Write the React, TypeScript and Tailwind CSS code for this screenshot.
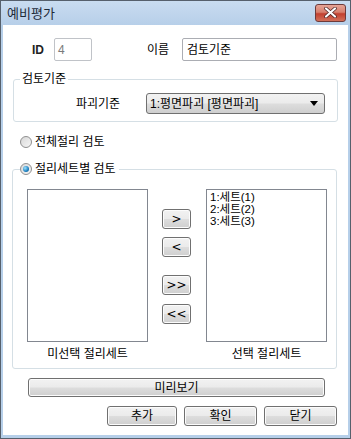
import { useState } from 'react'

const font = "font-['Liberation_Sans','Noto_Sans_CJK_KR',sans-serif]"
const btn =
  'flex items-center justify-center rounded-[3px] border border-[#707070] bg-[linear-gradient(to_bottom,#f2f2f2_0%,#ebebeb_48%,#dddddd_52%,#cfcfcf_100%)] text-[12px] text-black shadow-[inset_0_0_0_1px_#fcfcfc]'

function Radio({ checked, label }: { checked: boolean; label: string }) {
  return (
    <span className="flex items-center gap-[3px]">
      <span className="flex h-[12px] w-[12px] items-center justify-center rounded-full border border-[#8f8f8f] bg-[linear-gradient(135deg,#d8d8d8,#f6f6f6)]">
        {checked && (
          <span className="h-[6px] w-[6px] rounded-full bg-[radial-gradient(circle_at_35%_35%,#9fe3ff,#1d7fbf_60%,#0b4f86)]" />
        )}
      </span>
      <span className="text-[12px] leading-[14px] text-black">{label}</span>
    </span>
  )
}

function SmallButton({ label }: { label: string }) {
  return <button className={`${btn} h-[20px] w-[29px] text-[10px] font-['DejaVu_Sans',sans-serif]`}>{label}</button>
}

export default function App() {
  const [mode] = useState<'all' | 'set'>('set')
  const selected = ['1:세트(1)', '2:세트(2)', '3:세트(3)']

  return (
    <div className={`${font} flex h-[439px] w-[351px] flex-col border border-[#56606c] bg-[#b6cfe9]`}>
      {/* Title bar */}
      <div className="flex h-[24px] shrink-0 items-center justify-between bg-[linear-gradient(to_bottom,#c9dcf0,#b7cfe9)] pl-[6px] pr-[4px]">
        <span className="text-[13px] leading-none text-[#1e2a38]">예비평가</span>
        <button className="mt-[-1px] flex h-[18px] w-[31px] items-center justify-center rounded-[3px] border border-[#6d3b3b] bg-[linear-gradient(to_bottom,#e6a496_0%,#d7806e_45%,#c2402f_55%,#d2705a_100%)]">
          <svg width="13" height="11" viewBox="0 0 13 11">
            <path d="M2 1.5 L11 9.5 M11 1.5 L2 9.5" stroke="#4a2222" strokeWidth="3.6" strokeLinecap="round" />
            <path d="M2 1.5 L11 9.5 M11 1.5 L2 9.5" stroke="#ffffff" strokeWidth="2.2" strokeLinecap="round" />
          </svg>
        </button>
      </div>

      {/* Client area */}
      <div className="mx-[2px] mb-[3px] flex flex-1 flex-col bg-white">
        {/* ID / name row */}
        <div className="mt-[13px] flex h-[23px] items-center">
          <span className="ml-[29px] w-[22px] text-[12px] font-bold text-[#222]">ID</span>
          <div className="flex h-[23px] w-[38px] items-center rounded-[2px] border border-[#c0c3c8] px-[3px] text-[12px] text-[#7a7a7a]">
            4
          </div>
          <span className="ml-[55px] w-[35px] text-[12px] text-black">이름</span>
          <div className="flex h-[23px] w-[155px] items-center rounded-[2px] border border-[#abadb3] px-[4px] text-[12px] text-black">
            검토기준
          </div>
        </div>

        {/* 검토기준 group */}
        <fieldset className="mx-[10px] mt-[11px] w-[325px] rounded-[3px] border border-[#d5dfe5] px-0 pt-[7px] pb-[7px]">
          <legend className="ml-[6px] px-[2px] text-[12px] leading-[14px] text-black">검토기준</legend>
          <div className="flex items-center">
            <span className="ml-[62px] w-[70px] text-[12px] text-black">파괴기준</span>
            <div className="flex h-[21px] w-[179px] items-center justify-between rounded-[3px] border border-[#707070] bg-[linear-gradient(to_bottom,#f2f2f2_0%,#ebebeb_48%,#dddddd_52%,#cfcfcf_100%)] pl-[3px] pr-[6px]">
              <span className="text-[12px] text-black">1:평면파괴 [평면파괴]</span>
              <svg width="8" height="5" viewBox="0 0 8 5">
                <path d="M0 0 H8 L4 5 Z" fill="#000" />
              </svg>
            </div>
          </div>
        </fieldset>

        {/* 전체절리 radio */}
        <div className="ml-[17px] mt-[13px]">
          <Radio checked={mode === 'all'} label="전체절리 검토" />
        </div>

        {/* 절리세트별 group */}
        <fieldset className="mx-[9px] mt-[13px] w-[325px] rounded-[3px] border border-[#d5dfe5] px-0 pt-[13px] pb-[7px]">
          <legend className="ml-[7px] pr-[3px]">
            <Radio checked={mode === 'set'} label="절리세트별 검토" />
          </legend>
          <div className="flex">
            <div className="ml-[14px] flex w-[121px] flex-col items-center">
              <div className="h-[153px] w-[121px] border border-[#828790] bg-white" />
              <span className="mt-[5px] text-[12px] leading-[14px] text-black">미선택 절리세트</span>
            </div>
            <div className="ml-[14px] flex w-[29px] flex-col pt-[20px]">
              <SmallButton label=">" />
              <div className="mt-[8px]">
                <SmallButton label="<" />
              </div>
              <div className="mt-[18px]">
                <SmallButton label=">>" />
              </div>
              <div className="mt-[9px]">
                <SmallButton label="<<" />
              </div>
            </div>
            <div className="ml-[15px] flex w-[121px] flex-col items-center">
              <div className="flex h-[153px] w-[121px] flex-col border border-[#828790] bg-white px-[3px] pt-[1px]">
                {selected.map(s => (
                  <span key={s} className="text-[11.5px] leading-[12px] text-black">
                    {s}
                  </span>
                ))}
              </div>
              <span className="mt-[5px] text-[12px] leading-[14px] text-black">선택 절리세트</span>
            </div>
          </div>
        </fieldset>

        {/* Preview */}
        <button className={`${btn} ml-[25px] mt-[9px] h-[19px] w-[297px]`}>미리보기</button>

        {/* Bottom buttons */}
        <div className="mr-[11px] mt-[9px] flex justify-end gap-[7px]">
          <button className={`${btn} h-[20px] w-[70px]`}>추가</button>
          <button
            className={`${btn} h-[20px] w-[73px] border-[#3c7fb1] bg-[linear-gradient(to_bottom,#eaf6fd_0%,#d9f0fc_48%,#bee6fd_52%,#a7d9f5_100%)] shadow-[inset_0_0_0_1px_#48d8fb]`}
          >
            확인
          </button>
          <button className={`${btn} h-[20px] w-[73px]`}>닫기</button>
        </div>
      </div>
    </div>
  )
}
